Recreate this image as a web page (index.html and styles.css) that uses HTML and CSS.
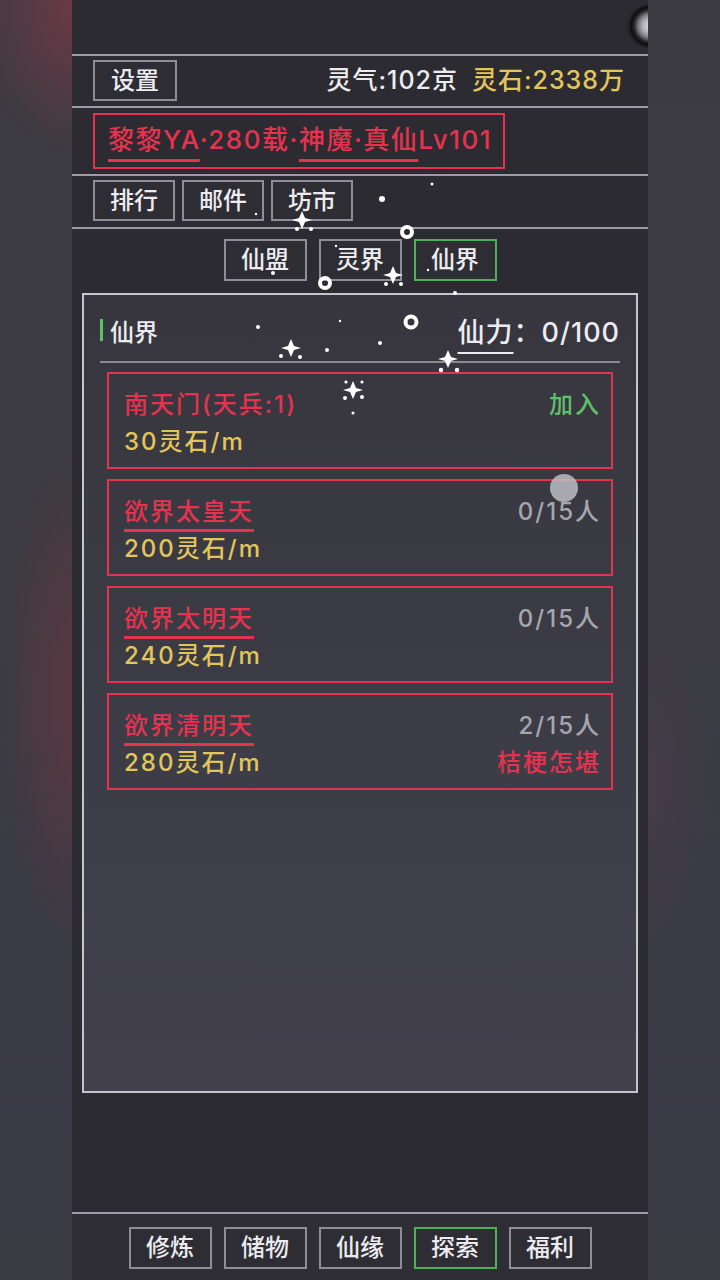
FILE: index.html
```html
<!DOCTYPE html>
<html lang="zh-CN">
<head>
  <meta charset="UTF-8">
  <meta name="viewport" content="width=device-width, initial-scale=1.0">
  <title>仙界</title>
  <link rel="stylesheet" href="styles.css">
</head>
<body>
  <div class="page">
    <div class="phone">
      <!-- Status area -->
      <div class="top-space">
        <span class="float-ball"></span>
      </div>

      <!-- Resources -->
      <div class="row stats-row">
        <button class="btn">设置</button>
        <div class="resources">
          <span class="qi">灵气:102京</span>
          <span class="stone">灵石:2338万</span>
        </div>
      </div>

      <!-- Player name -->
      <div class="row name-row">
        <div class="name-box"><span class="name-ul">黎黎YA</span>·280载·<span class="name-ul">神魔·真仙</span>Lv101</div>
      </div>

      <!-- Menu -->
      <div class="row menu-row">
        <button class="btn">排行</button>
        <button class="btn">邮件</button>
        <button class="btn">坊市</button>
      </div>

      <!-- Tabs -->
      <div class="row tab-row">
        <button class="btn">仙盟</button>
        <button class="btn">灵界</button>
        <button class="btn active">仙界</button>
      </div>

      <!-- Realm list -->
      <section class="panel">
        <div class="panel-head">
          <div class="panel-title"><span class="bar"></span>仙界</div>
          <div class="power"><span class="power-ul">仙力</span>：0/100</div>
        </div>
        <div class="realm-list">
          <div class="realm">
            <span class="realm-name">南天门(天兵:1)</span>
            <span class="realm-right join">加入</span>
            <span class="realm-cost">30灵石/m</span>
            <span></span>
          </div>
          <div class="realm">
            <span class="realm-name"><span class="realm-ul">欲界太皇天</span></span>
            <span class="realm-right">0/15人</span>
            <span class="realm-cost">200灵石/m</span>
            <span></span>
          </div>
          <div class="realm">
            <span class="realm-name"><span class="realm-ul">欲界太明天</span></span>
            <span class="realm-right">0/15人</span>
            <span class="realm-cost">240灵石/m</span>
            <span></span>
          </div>
          <div class="realm">
            <span class="realm-name"><span class="realm-ul">欲界清明天</span></span>
            <span class="realm-right">2/15人</span>
            <span class="realm-cost">280灵石/m</span>
            <span class="realm-right owner">桔梗怎堪</span>
          </div>
        </div>
      </section>

      <div class="spacer"></div>

      <!-- Bottom navigation -->
      <nav class="row bottom-nav">
        <button class="btn">修炼</button>
        <button class="btn">储物</button>
        <button class="btn">仙缘</button>
        <button class="btn active">探索</button>
        <button class="btn">福利</button>
      </nav>
    </div>
  </div>

  <!-- Sparkle effect and touch marker over the page -->
  <svg class="fx" viewBox="0 0 720 1280" width="720" height="1280">
    <g fill="#fff">
      <circle cx="432" cy="184" r="1.5"/>
      <circle cx="382" cy="199" r="3"/>
      <circle cx="256" cy="214" r="1.2"/>
      <circle cx="336" cy="246" r="1.2"/>
      <circle cx="273" cy="273" r="2"/>
      <circle cx="428" cy="270" r="1.2"/>
      <circle cx="455" cy="293" r="2"/>
      <circle cx="258" cy="327" r="2"/>
      <circle cx="340" cy="321" r="1.2"/>
      <circle cx="327" cy="350" r="2"/>
      <circle cx="380" cy="343" r="2"/>
      <circle cx="353" cy="413" r="1.5"/>
      <circle cx="297" cy="229" r="2"/>
      <circle cx="311" cy="229" r="2"/>
      <circle cx="386" cy="284" r="2"/>
      <circle cx="401" cy="284" r="2"/>
      <circle cx="281" cy="356" r="2"/>
      <circle cx="300" cy="357" r="2"/>
      <circle cx="441" cy="370" r="2.2"/>
      <circle cx="457" cy="370" r="2.2"/>
      <circle cx="345" cy="398" r="2"/>
      <circle cx="362" cy="397" r="2"/>
      <circle cx="346" cy="382" r="1.6"/>
      <circle cx="362" cy="382" r="1.6"/>
      <path d="M302 211 L305 218 L312 220 L305 222 L302 229 L299 222 L292 220 L299 218Z"/>
      <path d="M393 266 L396 273 L403 275 L396 277 L393 284 L390 277 L383 275 L390 273Z"/>
      <path d="M291 339 L294 346 L301 348 L294 350 L291 357 L288 350 L281 348 L288 346Z"/>
      <path d="M448 350 L451 357 L458 359 L451 361 L448 368 L445 361 L438 359 L445 357Z"/>
      <path d="M353 381 L356 388 L363 390 L356 392 L353 399 L350 392 L343 390 L350 388Z"/>
    </g>
    <g fill="none" stroke="#fff">
      <circle cx="407" cy="232" r="5" stroke-width="4"/>
      <circle cx="325" cy="283" r="5" stroke-width="4"/>
      <circle cx="411" cy="322" r="5.5" stroke-width="4"/>
    </g>
    <circle cx="564" cy="488" r="14" fill="#c4c4cc" fill-opacity="0.8"/>
  </svg>
</body>
</html>
```

FILE: styles.css
```css
:root {
  --line: #9d9ca6;
  --btn-border: #8f8e98;
  --red: #e5334f;
  --gold: #e3c65a;
  --green: #5fc06c;
  --text: #ececf0;
  --muted: #a6a6ae;
}

* {
  margin: 0;
  padding: 0;
  box-sizing: border-box;
}

body {
  width: 720px;
  height: 1280px;
  overflow: hidden;
  position: relative;
  font-family: "Inter", "Noto Sans CJK SC", sans-serif;
  font-weight: 500;
  color: var(--text);
  background-color: #3a3a40;
  background-image:
    radial-gradient(ellipse 110px 160px at 80px 0px, rgba(150, 55, 75, 0.55), transparent),
    radial-gradient(ellipse 80px 260px at 80px 700px, rgba(125, 50, 65, 0.5), transparent),
    radial-gradient(ellipse 60px 180px at 650px 790px, rgba(100, 60, 90, 0.25), transparent),
    linear-gradient(to bottom, #3b3b41 0%, #3c3c42 50%, #383a45 85%, #3a3a42 100%);
}

.page {
  display: flex;
  justify-content: center;
}

.phone {
  width: 576px;
  height: 1280px;
  background: #2c2b31;
  display: flex;
  flex-direction: column;
  position: relative;
  overflow: hidden;
}

/* Top status space */
.top-space {
  height: 54px;
  position: relative;
}

.float-ball {
  position: absolute;
  top: 4px;
  right: -22px;
  width: 44px;
  height: 44px;
  border-radius: 50%;
  background: radial-gradient(circle at 55% 50%, #dcdce0 0, #b4b4ba 7px, #7a7a80 12px, #2a2a2e 16px, #0e0e11 19px, #26262b 22px);
}

/* Shared rows and buttons */
.row {
  border-top: 2px solid var(--line);
  display: flex;
  align-items: flex-start;
}

.btn {
  width: 84px;
  height: 41px;
  border: 2px solid var(--btn-border);
  background: #2d2d33;
  color: var(--text);
  font-family: inherit;
  font-weight: inherit;
  font-size: 24px;
  line-height: 1;
  display: flex;
  align-items: center;
  justify-content: center;
  flex-shrink: 0;
}

.btn.active {
  border-color: #4fb05c;
}

/* Resources */
.stats-row {
  height: 52px;
  padding: 4px 23px 0 21px;
  justify-content: space-between;
}

.resources {
  display: flex;
  gap: 14px;
  font-size: 25px;
  letter-spacing: 1px;
  line-height: 41px;
}

.stone {
  color: var(--gold);
}

/* Player name */
.name-row {
  height: 68px;
  padding: 5px 21px 0;
}

.name-box {
  width: 412px;
  height: 56px;
  border: 2px solid var(--red);
  color: var(--red);
  font-size: 26px;
  letter-spacing: 1.5px;
  line-height: 50px;
  padding-left: 13px;
  white-space: nowrap;
}

.name-ul {
  text-decoration: underline;
  text-decoration-thickness: 3px;
  text-underline-offset: 10px;
}

/* Menu */
.menu-row {
  height: 53px;
  padding: 4px 21px 0;
  gap: 7px;
}

.menu-row .btn {
  width: 82px;
}

/* Tabs */
.tab-row {
  padding-top: 10px;
  justify-content: center;
  gap: 12px;
}

.tab-row .btn,
.bottom-nav .btn {
  width: 83px;
  height: 42px;
}

/* Panel */
.panel {
  margin: 12px 10px 0;
  height: 800px;
  border: 2px solid #c6c5ce;
  background: linear-gradient(to bottom, #37363e, #3d3d47 60%, #41404c);
}

.panel-head {
  margin: 0 16px;
  height: 68px;
  padding-top: 4px;
  border-bottom: 2px solid #8c8b95;
  display: flex;
  align-items: center;
  justify-content: space-between;
}

.panel-title {
  display: flex;
  align-items: center;
  gap: 7px;
  font-size: 24px;
}

.bar {
  width: 3px;
  height: 22px;
  background: var(--green);
}

.power {
  font-size: 27px;
  letter-spacing: 1px;
}

.power-ul {
  text-decoration: underline;
  text-decoration-thickness: 2px;
  text-underline-offset: 10px;
}

.realm-list {
  padding: 9px 23px 0;
  display: flex;
  flex-direction: column;
  gap: 10px;
}

.realm {
  height: 97px;
  border: 2px solid var(--red);
  padding: 10px 12px 0 15px;
  display: grid;
  grid-template-columns: 1fr auto;
  grid-template-rows: 37px 37px;
  align-items: center;
  font-size: 24px;
  letter-spacing: 2px;
}

.realm-name {
  color: var(--red);
}

.realm-ul {
  text-decoration: underline;
  text-decoration-thickness: 3px;
  text-underline-offset: 9px;
}

.realm-cost {
  color: var(--gold);
}

.realm-right {
  color: var(--muted);
  text-align: right;
  margin-right: -2px;
}

.realm-right.join {
  color: var(--green);
}

.realm-right.owner {
  color: var(--red);
}

.spacer {
  flex: 1;
}

/* Bottom navigation */
.bottom-nav {
  height: 68px;
  padding-top: 13px;
  justify-content: center;
  gap: 12px;
  background: #2f2e34;
}

/* Effect layer */
.fx {
  position: absolute;
  top: 0;
  left: 0;
  pointer-events: none;
}
```
